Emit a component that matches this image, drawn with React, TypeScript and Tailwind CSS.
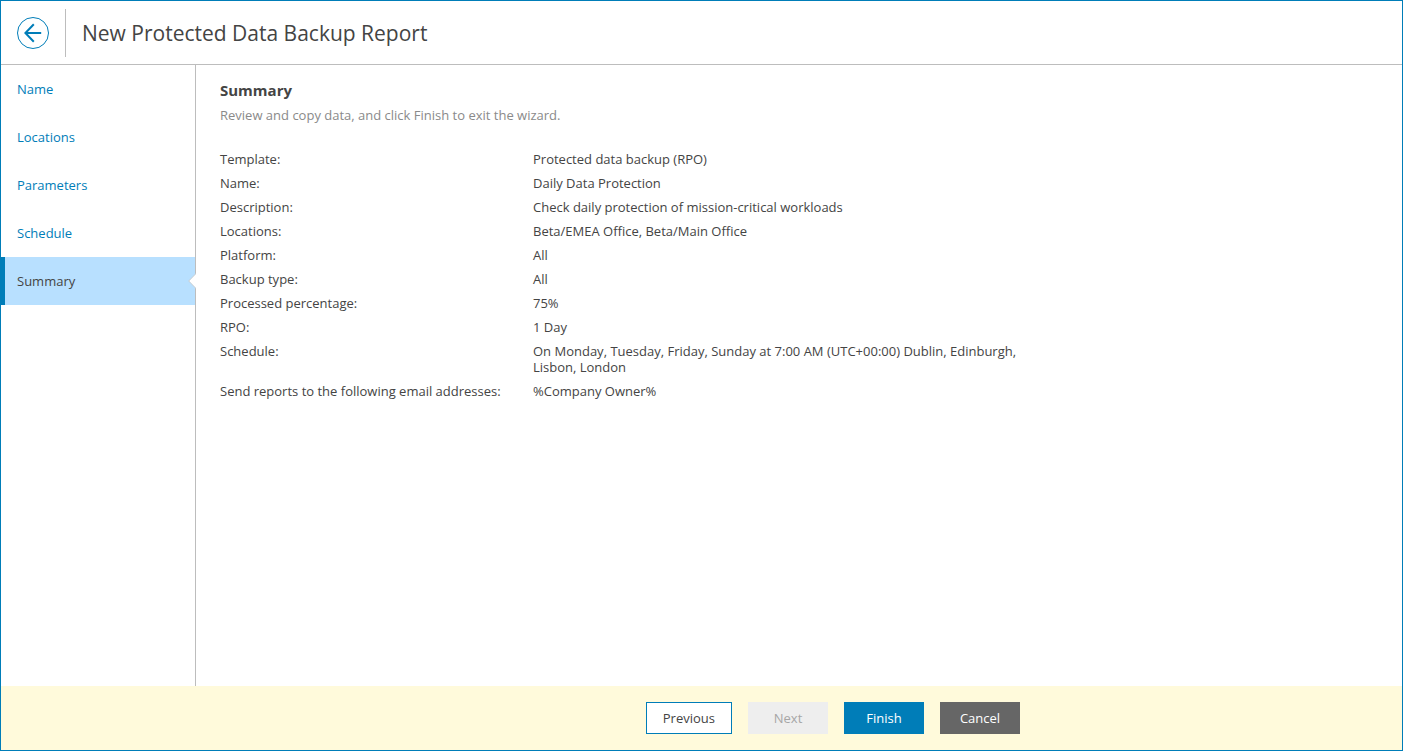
import React from 'react';
import clsx from 'clsx';

const steps = ['Name', 'Locations', 'Parameters', 'Schedule', 'Summary'];

const summary = [
  { label: 'Template:', value: 'Protected data backup (RPO)' },
  { label: 'Name:', value: 'Daily Data Protection' },
  { label: 'Description:', value: 'Check daily protection of mission-critical workloads' },
  { label: 'Locations:', value: 'Beta/EMEA Office, Beta/Main Office' },
  { label: 'Platform:', value: 'All' },
  { label: 'Backup type:', value: 'All' },
  { label: 'Processed percentage:', value: '75%' },
  { label: 'RPO:', value: '1 Day' },
  {
    label: 'Schedule:',
    value: 'On Monday, Tuesday, Friday, Sunday at 7:00 AM (UTC+00:00) Dublin, Edinburgh, Lisbon, London',
  },
  { label: 'Send reports to the following email addresses:', value: '%Company Owner%' },
];

function Header() {
  return (
    <header className="flex h-16 shrink-0 items-center border-b border-[#bdbdbd] pl-4">
      <button type="button" aria-label="Back" className="mr-4 size-8 shrink-0">
        <svg viewBox="0 0 32 32" className="size-8" fill="none" stroke="#007db8">
          <circle cx="16" cy="16" r="15.5" strokeWidth="1" />
          <path d="M24.2 16H8.6M16.8 7.2L8.4 16l8.4 8.8" strokeWidth="2" />
        </svg>
      </button>
      <div className="h-12 border-l border-[#bdbdbd]" />
      <h1 className="ml-4 text-[21px] leading-7">New Protected Data Backup Report</h1>
    </header>
  );
}

function Sidebar() {
  return (
    <nav className="w-[195px] shrink-0 border-r border-[#bdbdbd]">
      <ul>
        {steps.map((step) => {
          const active = step === 'Summary';
          return (
            <li key={step} className="relative">
              <a
                href="#"
                aria-current={active ? 'step' : undefined}
                className={clsx(
                  'flex h-12 items-center',
                  active ? 'border-l-4 border-[#007db8] bg-[#b8e0ff] pl-3' : 'pl-4 text-[#007db8]'
                )}
              >
                {step}
              </a>
              {/* notch that points from the content to the current step */}
              {active && (
                <svg
                  viewBox="0 0 8 16"
                  className="absolute top-4 -right-px h-4 w-2"
                  fill="#fff"
                >
                  <path d="M8 0.5L0.7 8L8 15.5" stroke="#c4ccd2" strokeWidth="1" />
                </svg>
              )}
            </li>
          );
        })}
      </ul>
    </nav>
  );
}

function Summary() {
  return (
    <main className="min-w-0 flex-1 px-6 pt-4 pb-6">
      <h2 className="text-[15px] leading-[18px] font-bold">Summary</h2>
      <p className="mt-2 text-[#8a8a8a]">
        Review and copy data, and click Finish to exit the wizard.
      </p>
      <table className="mt-6 w-full max-w-[800px] table-fixed text-left">
        <tbody>
          {summary.map(({ label, value }) => (
            <tr key={label} className="align-top">
              <th scope="row" className="w-[313px] py-1 font-normal">
                {label}
              </th>
              <td className="py-1">{value}</td>
            </tr>
          ))}
        </tbody>
      </table>
    </main>
  );
}

function Footer() {
  return (
    <footer className="shrink-0 bg-[#fffadb] py-4 pr-6 pl-[219px]">
      <div className="flex max-w-[800px] justify-end gap-4">
        <button type="button" className="h-8 border border-[#007db8] bg-white px-4">
          Previous
        </button>
        <button type="button" disabled className="h-8 w-20 bg-[#eeeeee] text-[#a6a6a6]">
          Next
        </button>
        <button type="button" className="h-8 w-20 bg-[#007db8] text-white">
          Finish
        </button>
        <button type="button" className="h-8 w-20 bg-[#666666] text-white">
          Cancel
        </button>
      </div>
    </footer>
  );
}

export default function App() {
  return (
    <div className="flex min-h-screen flex-col border border-[#007db8] bg-white font-['Open_Sans','Noto_Sans',sans-serif] text-[13px] leading-4 text-[#444444]">
      <Header />
      <div className="flex flex-1">
        <Sidebar />
        <Summary />
      </div>
      <Footer />
    </div>
  );
}
